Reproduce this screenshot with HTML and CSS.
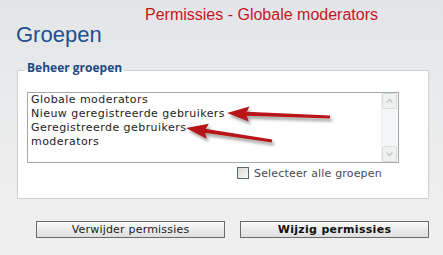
FILE: index.html
```html
<!DOCTYPE html>
<html lang="nl">
<head>
<meta charset="utf-8">
<title>Permissies - Globale moderators</title>
<link rel="stylesheet" href="styles.css">
</head>
<body>
<p class="title">Permissies - Globale moderators</p>
<h1 class="heading">Groepen</h1>
<fieldset class="panel">
  <legend class="legend">Beheer groepen</legend>
  <div class="listbox">
    <ul class="items">
      <li>Globale moderators</li>
      <li>Nieuw geregistreerde gebruikers</li>
      <li>Geregistreerde gebruikers</li>
      <li>moderators</li>
    </ul>
    <div class="scrollbar">
      <span class="sb-btn"><svg width="13" height="14" viewBox="0 0 13 14"><path d="M3.5 8.5 L6.5 5.5 L9.5 8.5" fill="none" stroke="#bfc5c8" stroke-width="1.4"/></svg></span>
      <span class="sb-btn"><svg width="13" height="14" viewBox="0 0 13 14"><path d="M3.5 5.5 L6.5 8.5 L9.5 5.5" fill="none" stroke="#bfc5c8" stroke-width="1.4"/></svg></span>
    </div>
  </div>
  <label class="check-row"><span class="checkbox"></span><span class="check-label">Selecteer alle groepen</span></label>
</fieldset>
<div class="actions">
  <button class="btn" type="button">Verwijder permissies</button>
  <button class="btn btn-strong" type="button">Wijzig permissies</button>
</div>
<h2 class="next-heading">Nieuwe groep</h2>

<svg class="arrows" width="443" height="255" viewBox="0 0 443 255">
  <defs>
    <filter id="shadow" x="-20%" y="-60%" width="140%" height="220%">
      <feDropShadow dx="2" dy="3" stdDeviation="1.6" flood-color="#555" flood-opacity="0.55"/>
    </filter>
  </defs>
  <g filter="url(#shadow)" fill="#b81219">
    <g transform="translate(330 117) rotate(182.2)">
      <path d="M0 -1.4 L84 -2 L84 2 L0 1.4 Z"/>
      <path d="M103 0 L81 -7.5 L84 0 L81 7.5 Z"/>
    </g>
    <g transform="translate(272 141) rotate(188.6)">
      <path d="M0 -1.4 L68 -2 L68 2 L0 1.4 Z"/>
      <path d="M87 0 L65 -7.5 L68 0 L65 7.5 Z"/>
    </g>
  </g>
</svg>
</body>
</html>
```

FILE: styles.css
```css
html, body {
  margin: 0;
  padding: 0;
}
body {
  width: 443px;
  height: 255px;
  overflow: hidden;
  background: linear-gradient(#e4e5e8 0px, #eaebec 110px, #f0f0f0 255px);
  font-family: "DejaVu Sans", Verdana, sans-serif;
  color: #222;
}
.title {
  margin: 0;
  padding: 7px 0 0 145px;
  font: 16px/16px "Liberation Sans", Arial, sans-serif;
  color: #c4161d;
}
.heading {
  margin: 0;
  padding-left: 16px;
  font: normal 22px/24px "Liberation Sans", Arial, sans-serif;
  color: #20508e;
}
.panel {
  margin: 14px 14px 0 17px;
  padding: 13px 0 18px 9px;
  border: 1px solid #cfd0d2;
  background: #fff;
  min-width: 0;
}
.legend {
  margin-left: -2px;
  padding: 0 2px 4px;
  font: bold 12px/14px "Open Sans", "DejaVu Sans", sans-serif;
  color: #1d4a86;
}
.listbox {
  display: flex;
  width: 372px;
  height: 71px;
  box-sizing: border-box;
  border: 1px solid #a3a8ab;
  background: #fff;
}
.items {
  flex: 1;
  margin: 0;
  padding: 0 0 0 3px;
  list-style: none;
  font-size: 11px;
  line-height: 14px;
  letter-spacing: 0.45px;
  color: #1c1c1c;
}
.scrollbar {
  width: 16px;
  display: flex;
  flex-direction: column;
  justify-content: space-between;
  background: #f5f6f7;
  border-left: 1px solid #eceeef;
}
.sb-btn {
  display: flex;
  align-items: center;
  justify-content: center;
  width: 15px;
  height: 16px;
  box-sizing: border-box;
  background: #eff1f1;
  border: 1px solid #d9dcde;
  border-radius: 2px;
}
.check-row {
  display: flex;
  align-items: flex-start;
  margin-top: 4px;
  padding-left: 210px;
}
.checkbox {
  width: 12px;
  height: 12px;
  box-sizing: border-box;
  border: 1px solid #5a6672;
  background: linear-gradient(135deg, #d8d8d6, #f7f7f5);
}
.check-label {
  margin-left: 5px;
  font-size: 11px;
  line-height: 13px;
  letter-spacing: 0.17px;
  color: #4a4a4a;
}
.actions {
  display: flex;
  gap: 15px;
  margin-top: 22px;
  padding-left: 36px;
}
.btn {
  width: 189px;
  height: 17px;
  padding: 0;
  box-sizing: border-box;
  border: 1px solid #6b6b6b;
  border-radius: 0;
  background: linear-gradient(#fafafa, #dedede);
  font-family: "DejaVu Sans", Verdana, sans-serif;
  font-size: 11px;
  line-height: 15px;
  letter-spacing: 0.2px;
  color: #222;
}
.btn-strong {
  font-weight: bold;
  letter-spacing: 0.3px;
  color: #111;
}
.next-heading {
  margin: 14px 0 0;
  padding-left: 25px;
  font: normal 18px/20px "Liberation Sans", Arial, sans-serif;
  color: #20508e;
}
.arrows {
  position: absolute;
  top: 0;
  left: 0;
  pointer-events: none;
}
```
